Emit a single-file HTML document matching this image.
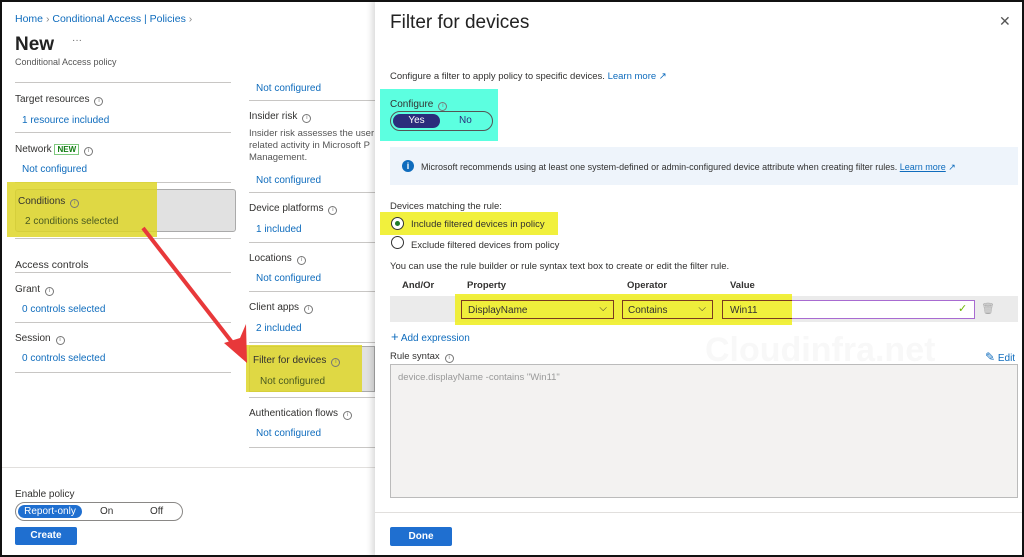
<!DOCTYPE html>
<html><head><meta charset="utf-8"><style>
*{box-sizing:border-box;margin:0;padding:0}
body{width:1024px;height:557px;overflow:hidden;background:#fff;font-family:"Liberation Sans",sans-serif;font-size:10px;color:#323130;position:relative}
.a{position:absolute;white-space:nowrap;margin-top:3px}
.b{margin-top:0}
.l{color:#0f6cbd}
.hr{position:absolute;height:1px;background:#c8c6c4}
.i{display:inline-block;width:9px;height:9px;border:1px solid #777;border-radius:50%;font-size:6px;line-height:7px;text-align:center;color:#777;margin-left:5px;vertical-align:0}
</style></head><body>
<div style="position:absolute;inset:0;border:2px solid #111;z-index:50;pointer-events:none"></div>
<!-- left -->
<div class="a l" style="left:15px;top:10px;font-size:10.5px">Home <span style="color:#888">›</span> Conditional Access | Policies <span style="color:#888">›</span></div>
<div class="a" style="left:15px;top:31px;font-size:19px;font-weight:bold;color:#222">New</div>
<div class="a" style="left:72px;top:32px;color:#666">···</div>
<div class="a" style="left:15px;top:54px;font-size:9px;color:#555">Conditional Access policy</div>
<div class="hr" style="left:15px;top:82px;width:216px"></div>
<div class="a" style="left:15px;top:91px">Target resources<span class="i">i</span></div>
<div class="a l" style="left:22px;top:112px">1 resource included</div>
<div class="hr" style="left:15px;top:132px;width:216px"></div>
<div class="a" style="left:15px;top:141px">Network <span style="border:1px solid #7fc97f;color:#107c10;font-weight:bold;font-size:8px;padding:0 2px">NEW</span><span class="i">i</span></div>
<div class="a l" style="left:22px;top:161px">Not configured</div>
<div class="hr" style="left:15px;top:182px;width:216px"></div>
<div class="a b" style="left:15px;top:189px;width:221px;height:43px;background:#e1e1e1;border:1px solid #aaa;border-radius:3px"></div>
<div class="a b" style="left:7px;top:182px;width:150px;height:55px;background:rgba(222,214,40,.85)"></div>
<div class="a" style="left:18px;top:193px">Conditions<span class="i">i</span></div>
<div class="a" style="left:25px;top:213px;color:#4a5a20">2 conditions selected</div>
<div class="hr" style="left:15px;top:238px;width:216px"></div>
<div class="a" style="left:15px;top:256px;font-size:10.5px">Access controls</div>
<div class="hr" style="left:15px;top:272px;width:216px"></div>
<div class="a" style="left:15px;top:281px">Grant<span class="i">i</span></div>
<div class="a l" style="left:22px;top:301px">0 controls selected</div>
<div class="hr" style="left:15px;top:322px;width:216px"></div>
<div class="a" style="left:15px;top:330px">Session<span class="i">i</span></div>
<div class="a l" style="left:22px;top:350px">0 controls selected</div>
<div class="hr" style="left:15px;top:372px;width:216px"></div>
<!-- right col -->
<div class="a l" style="left:256px;top:80px">Not configured</div>
<div class="hr" style="left:249px;top:100px;width:126px"></div>
<div class="a" style="left:249px;top:108px">Insider risk<span class="i">i</span></div>
<div class="a" style="left:249px;top:125px;line-height:12px;font-size:9.5px;color:#555;width:126px;overflow:hidden">Insider risk assesses the user<br>related activity in Microsoft P<br>Management.</div>
<div class="a l" style="left:256px;top:172px">Not configured</div>
<div class="hr" style="left:249px;top:192px;width:126px"></div>
<div class="a" style="left:249px;top:200px">Device platforms<span class="i">i</span></div>
<div class="a l" style="left:256px;top:221px">1 included</div>
<div class="hr" style="left:249px;top:242px;width:126px"></div>
<div class="a" style="left:249px;top:250px">Locations<span class="i">i</span></div>
<div class="a l" style="left:256px;top:270px">Not configured</div>
<div class="hr" style="left:249px;top:291px;width:126px"></div>
<div class="a" style="left:249px;top:299px">Client apps<span class="i">i</span></div>
<div class="a l" style="left:256px;top:320px">2 included</div>
<div class="hr" style="left:249px;top:342px;width:126px"></div>
<div class="a b" style="left:249px;top:346px;width:126px;height:46px;background:#e1e1e1;border:1px solid #aaa"></div>
<div class="a b" style="left:246px;top:345px;width:116px;height:47px;background:rgba(222,214,40,.85)"></div>
<div class="a" style="left:253px;top:352px">Filter for devices<span class="i">i</span></div>
<div class="a" style="left:260px;top:373px;color:#4a5a20">Not configured</div>
<div class="hr" style="left:249px;top:397px;width:126px"></div>
<div class="a" style="left:249px;top:405px">Authentication flows<span class="i">i</span></div>
<div class="a l" style="left:256px;top:425px">Not configured</div>
<div class="hr" style="left:249px;top:447px;width:126px"></div>
<!-- bottom -->
<div class="hr" style="left:0;top:467px;width:375px;background:#e1dfdd"></div>
<div class="a" style="left:15px;top:486px">Enable policy</div>
<div class="a b" style="left:15px;top:502px;width:168px;height:19px;border:1px solid #8a8886;border-radius:10px"></div>
<div class="a b" style="left:18px;top:505px;width:64px;height:13px;background:#1f6fd0;border-radius:7px;color:#fff;text-align:center;line-height:13px">Report-only</div>
<div class="a b" style="left:100px;top:506px">On</div>
<div class="a b" style="left:150px;top:506px">Off</div>
<div class="a b" style="left:15px;top:527px;width:62px;height:18px;background:#1f6fd0;color:#fff;font-weight:bold;text-align:center;line-height:18px;border-radius:2px">Create</div>
<!-- arrow -->
<svg class="a b" style="left:0;top:0;z-index:5" width="380" height="400"><line x1="143" y1="228" x2="238" y2="350" stroke="#e8383a" stroke-width="4"/><polygon points="247,363 224,343 240,338 246,324" fill="#e8383a"/></svg>
<!-- blade -->
<div class="a b" style="left:375px;top:0;width:649px;height:557px;background:#fff;box-shadow:-3px 0 6px rgba(0,0,0,.15)"></div>
<div class="a" style="left:390px;top:9px;font-size:19px;color:#222">Filter for devices</div>
<div class="a" style="left:999px;top:10px;font-size:14px;color:#555">✕</div>
<div class="a" style="left:390px;top:68px;font-size:9.5px">Configure a filter to apply policy to specific devices. <span class="l">Learn more ↗</span></div>
<div class="a b" style="left:380px;top:89px;width:118px;height:52px;background:#5cffe0"></div>
<div class="a" style="left:390px;top:96px">Configure<span class="i">i</span></div>
<div class="a b" style="left:390px;top:111px;width:103px;height:20px;border:1px solid #555;border-radius:10px"></div>
<div class="a b" style="left:393px;top:114px;width:47px;height:14px;background:#2b2d7c;border-radius:7px;color:#fff;text-align:center;line-height:14px">Yes</div>
<div class="a b" style="left:459px;top:115px;color:#2b2d7c">No</div>
<div class="a b" style="left:390px;top:147px;width:628px;height:38px;background:#eef4fb"></div>
<div class="a b" style="left:402px;top:160px;width:12px;height:12px;border-radius:50%;background:#0f6cbd;color:#fff;font-size:9px;text-align:center;line-height:12px;font-weight:bold">i</div>
<div class="a" style="left:421px;top:159px;font-size:9px">Microsoft recommends using at least one system-defined or admin-configured device attribute when creating filter rules. <span class="l" style="text-decoration:underline">Learn more</span> <span class="l">↗</span></div>
<div class="a" style="left:390px;top:198px;font-size:9.5px">Devices matching the rule:</div>
<div class="a b" style="left:380px;top:212px;width:178px;height:23px;background:rgba(240,238,40,.9)"></div>
<div class="a b" style="left:391px;top:217px;width:13px;height:13px;border:1px solid #333;border-radius:50%;background:#fff"></div>
<div class="a b" style="left:395px;top:221px;width:5px;height:5px;border-radius:50%;background:#1d7a2a"></div>
<div class="a" style="left:411px;top:216px;font-size:9.5px">Include filtered devices in policy</div>
<div class="a b" style="left:391px;top:236px;width:13px;height:13px;border:1px solid #333;border-radius:50%"></div>
<div class="a" style="left:411px;top:237px;font-size:9.5px">Exclude filtered devices from policy</div>
<div class="a" style="left:390px;top:258px;font-size:9.5px">You can use the rule builder or rule syntax text box to create or edit the filter rule.</div>
<div class="a" style="left:402px;top:277px;font-weight:bold;font-size:9.5px">And/Or</div>
<div class="a" style="left:467px;top:277px;font-weight:bold;font-size:9.5px">Property</div>
<div class="a" style="left:627px;top:277px;font-weight:bold;font-size:9.5px">Operator</div>
<div class="a" style="left:730px;top:277px;font-weight:bold;font-size:9.5px">Value</div>
<div class="a b" style="left:390px;top:296px;width:628px;height:26px;background:#ebebeb"></div>
<div class="a b" style="left:722px;top:300px;width:253px;height:19px;background:#fff;border:1px solid #a86bd1"></div>
<div class="a b" style="left:958px;top:302px;color:#6bb700;font-size:11px">✓</div>
<div class="a b" style="left:981px;top:302px;color:#aaa;font-size:11px">🗑</div>
<div class="a b" style="left:455px;top:294px;width:337px;height:31px;background:rgba(240,238,40,.9)"></div>
<div class="a b" style="left:461px;top:300px;width:153px;height:19px;border:1px solid #7a3a20;padding:4px 6px">DisplayName<span style="position:absolute;right:6px;top:2px">⌵</span></div>
<div class="a b" style="left:622px;top:300px;width:91px;height:19px;border:1px solid #7a3a20;padding:4px 5px">Contains<span style="position:absolute;right:6px;top:2px">⌵</span></div>
<div class="a b" style="left:722px;top:300px;width:70px;height:19px;border:1px solid #7a3a20;border-right:none;padding:4px 7px">Win11</div>
<div class="a l" style="left:391px;top:326px"><span style="font-size:13px">+</span> Add expression</div>
<div class="a" style="left:705px;top:328px;font-size:34px;font-weight:bold;color:#f8f8f8">Cloudinfra.net</div>
<div class="a" style="left:390px;top:348px;font-size:9.5px">Rule syntax<span class="i">i</span></div>
<div class="a l" style="left:985px;top:347px"><span style="font-size:12px">✎</span> Edit</div>
<div class="a b" style="left:390px;top:364px;width:628px;height:134px;background:#f3f2f1;border:1px solid #bbb;padding:7px 7px;color:#999;font-size:9.5px">device.displayName -contains "Win11"</div>
<div class="a b" style="left:375px;top:512px;width:649px;height:1px;background:#e1dfdd"></div>
<div class="a b" style="left:390px;top:527px;width:62px;height:19px;background:#1f6fd0;color:#fff;font-weight:bold;text-align:center;line-height:19px;border-radius:2px">Done</div>
</body></html>
